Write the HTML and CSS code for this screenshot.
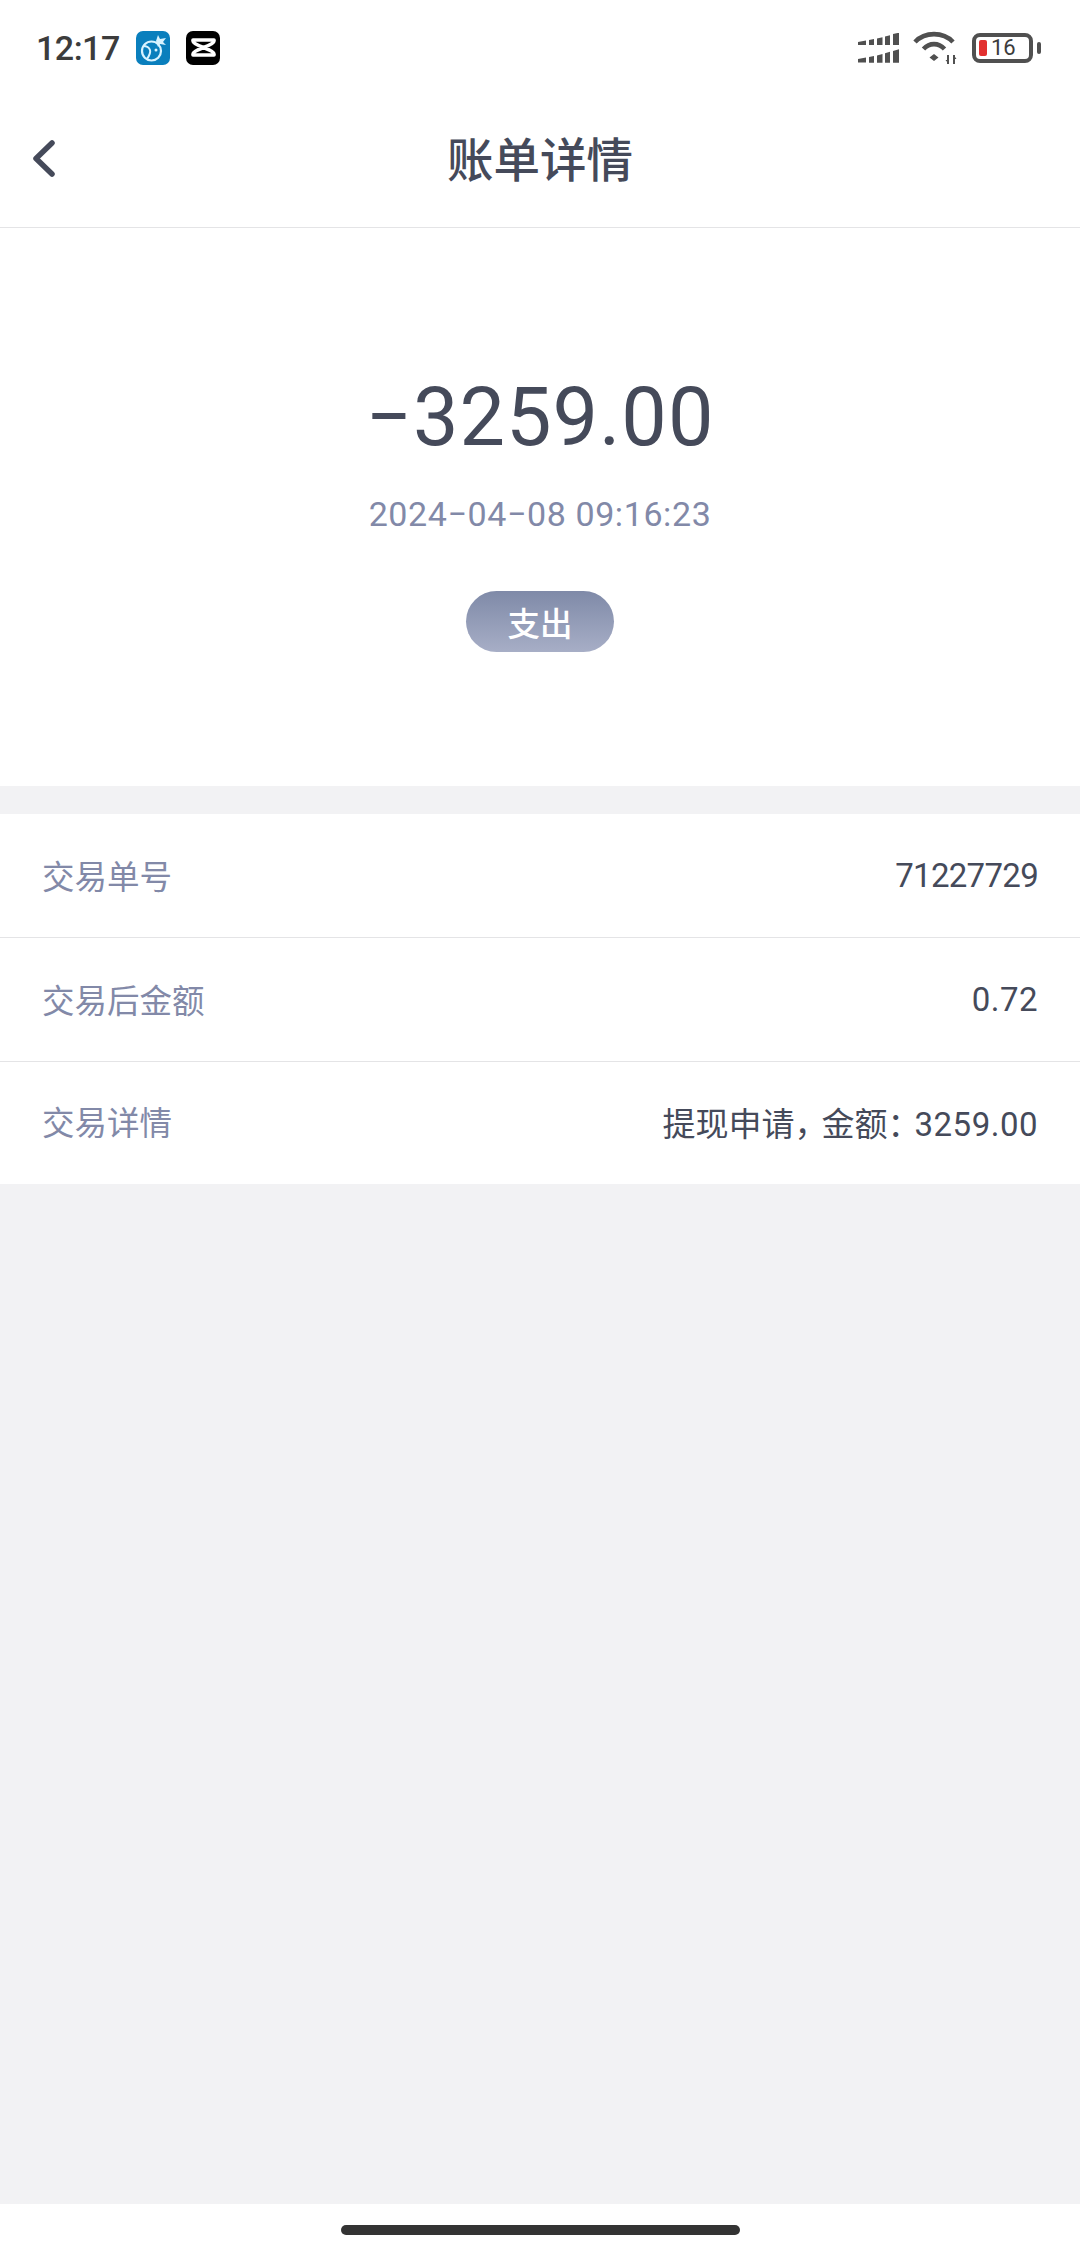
FILE: index.html
```html
<!DOCTYPE html>
<html lang="zh">
<head>
<meta charset="utf-8">
<title>账单详情</title>
<link rel="stylesheet" href="styles.css">
</head>
<body>
<div class="page">
  <div class="status">
    <div class="status-left">
      <span class="clock">12:17</span>
      <svg class="app" viewBox="0 0 34 34"><rect width="34" height="34" rx="7" fill="#0a7fbd"/><circle cx="15.500" cy="20" r="9.500" fill="none" stroke="#d8f3ff" stroke-width="2.200"/><path d="M7 15c3 0 6 1 7 4s-1 6-3 9" fill="none" stroke="#d8f3ff" stroke-width="2"/><circle cx="20" cy="19" r="1.500" fill="#d8f3ff"/><path d="M20 10l2-6 2 4 6-1-3 4 3 3-6-1-2 3z" fill="#d8f3ff"/></svg>
      <svg class="app" viewBox="0 0 34 34"><rect width="34" height="34" rx="7" fill="#000"/><path d="M7 9h21v1c0 2-4 4-10.500 6.500C11 19 7 21 7 23v1h21v-1c0-2-4-4-10.500-6.500C11 14 7 12 7 10z" fill="none" stroke="#fff" stroke-width="3.600" stroke-linejoin="round"/></svg>
    </div>
    <div class="status-right">
      <svg class="signal" viewBox="0 0 41 30"><g fill="#505050"><path d="M0 9l8-1.500V12H0zM11 7l5-1v6h-5zM19 5.500l5.500-1.200V12H19zM27 3.500l5-1.300V12h-5zM35 1l6-1.300V12h-6z"/><path d="M0 26l8-1.500v5H0zM11 24l5-1v6.700h-5zM19 22.500l5.500-1.500v8.700H19zM27 20.200l5-1.500v11h-5zM35 18l6-1.700v13.400h-6z"/></g></svg>
      <svg class="wifi" viewBox="0 0 45 33"><g fill="none" stroke="#505050" stroke-width="4.600"><path d="M2 11C12 0.500 30 0.500 40 11"/><path d="M10.500 18C16.500 11.500 25.500 11.500 31.500 18"/></g><path d="M16.500 26.500l4.500-3.500 4.500 3.500-4.500 3.500z" fill="#505050"/><path d="M35 24v9M41 24v9" stroke="#505050" stroke-width="2"/><path d="M32.500 29l2.500 3v-3zM43.500 28l-2.500-3.500v3.500z" fill="#505050"/></svg>
      <div class="battery">
        <div class="battery-body"><span class="battery-fill"></span><span class="battery-num">16</span></div>
        <span class="battery-tip"></span>
      </div>
    </div>
  </div>
  <header class="nav">
    <svg class="back" viewBox="0 0 24 40"><path d="M21 5L5 20.500 21 36" fill="none" stroke="#454a5a" stroke-width="5.500" stroke-linecap="round" stroke-linejoin="round"/></svg>
    <h1 class="title">账单详情</h1>
  </header>
  <section class="hero">
    <div class="amount">−3259.00</div>
    <div class="date">2024−04−08 09:16:23</div>
    <div class="tag">支出</div>
  </section>
  <section class="list">
    <div class="row"><span class="label">交易单号</span><span class="value tight">71227729</span></div>
    <div class="row"><span class="label">交易后金额</span><span class="value"><span class="num">0.72</span></span></div>
    <div class="row"><span class="label">交易详情</span><span class="value">提现申请<span class="punct">，</span>金额<span class="punct">：</span><span class="num">3259.00</span></span></div>
  </section>
  <div class="fill"></div>
  <div class="home"><span class="home-bar"></span></div>
</div>
</body>
</html>
```
FILE: styles.css
```css
* { box-sizing: border-box; }
html, body { margin: 0; padding: 0; }
body { font-family: Roboto, "Noto Sans CJK SC", sans-serif; background: #fff; }
.page { width: 1080px; height: 2248px; display: flex; flex-direction: column; background: #f2f2f4; }
.status { height: 92px; background: #fff; display: flex; justify-content: space-between; align-items: center; padding: 3px 39px 0 36px; }
.status-left { display: flex; align-items: center; }
.clock { font-size: 34px; font-weight: 500; color: #3c3c3c; letter-spacing: -0.500px; width: 100px; }
.app { width: 34px; height: 34px; margin-right: 16px; display: block; }
.status-right { display: flex; align-items: center; }
.signal { width: 41px; height: 30px; display: block; margin-right: 14px; }
.wifi { width: 45px; height: 33px; display: block; margin-right: 14px; }
.battery { display: flex; align-items: center; gap: 4px; }
.battery-body { width: 61px; height: 30px; border: 4px solid #505050; border-radius: 8px; display: flex; align-items: center; padding-left: 3px; }
.battery-fill { width: 8px; height: 16px; background: #e2302f; border-radius: 2px; margin-right: 4px; }
.battery-num { font-size: 22px; font-weight: 400; color: #3c3c3c; line-height: 1; }
.battery-tip { width: 4px; height: 12px; background: #505050; border-radius: 2px; }
.nav { height: 136px; padding-bottom: 6px; background: #fff; border-bottom: 1px solid #e4e4e6; display: flex; align-items: center; justify-content: center; position: relative; }
.back { width: 24px; height: 40px; position: absolute; left: 31px; top: 46px; }
.title { margin: 0; font-size: 46.500px; font-weight: 500; color: #454a5a; }
.hero { height: 558px; background: #fff; display: flex; flex-direction: column; align-items: center; padding-top: 145px; }
.amount { font-size: 81px; line-height: 90px; font-weight: 400; letter-spacing: 1px; color: #454a5a; }
.date { margin-top: 29px; font-size: 34px; line-height: 44px; letter-spacing: 0.600px; color: #8289a8; }
.tag { margin-top: 55px; width: 148px; height: 61px; border-radius: 31px; background: linear-gradient(180deg, #7f8aa8, #a7aec6); color: #fff; font-size: 32.500px; font-weight: 500; display: flex; align-items: center; justify-content: center; }
.list { margin-top: 28px; background: #fff; }
.row { height: 124px; padding: 0 42px; display: flex; align-items: center; justify-content: space-between; border-bottom: 1px solid #e4e4e6; }
.row:last-child { height: 122px; padding-bottom: 3px; border-bottom: 0; }
.label { font-size: 32.500px; color: #8289a8; padding-bottom: 3px; }
.value { font-size: 33px; color: #454a5a; }
.tight { letter-spacing: -0.700px; }
.num { letter-spacing: 0.500px; }
.punct { letter-spacing: -6px; }
.fill { flex: 1; }
.home { height: 44px; background: #fff; display: flex; justify-content: center; padding-top: 21px; }
.home-bar { width: 399px; height: 10px; border-radius: 5px; background: #333; }
```
